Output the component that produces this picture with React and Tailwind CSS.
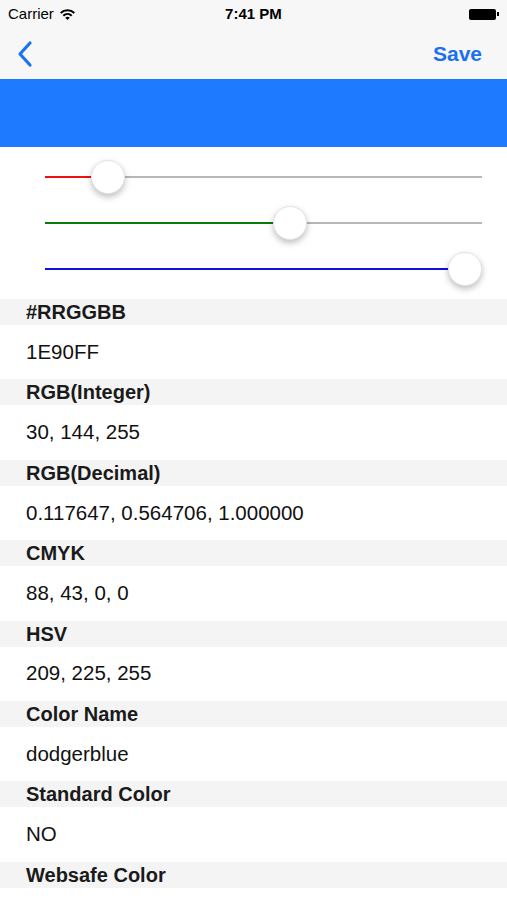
const rows = [
  ['#RRGGBB', '1E90FF'],
  ['RGB(Integer)', '30, 144, 255'],
  ['RGB(Decimal)', '0.117647, 0.564706, 1.000000'],
  ['CMYK', '88, 43, 0, 0'],
  ['HSV', '209, 225, 255'],
  ['Color Name', 'dodgerblue'],
  ['Standard Color', 'NO'],
  ['Websafe Color', ''],
];

const Slider = ({ color, pos }) => (
  <div className="relative h-[46px] mx-[45px] mr-[25px]">
    <div className="absolute left-0 right-0 top-[22px] h-[2px] bg-[#b6b6b6]" />
    <div className="absolute left-0 top-[22px] h-[2px]" style={{ width: pos, background: color }} />
    <div
      className="absolute top-[6px] w-[34px] h-[34px] rounded-full bg-white shadow-[0_3px_6px_rgba(0,0,0,0.25)] border border-[#e4e4e4]"
      style={{ left: pos - 17 }}
    />
  </div>
);

export default function App() {
  return (
    <div className="w-[507px] h-[900px] overflow-hidden bg-white" style={{ fontFamily: '"Liberation Sans", Arial, sans-serif' }}>
      <div className="bg-[#f7f7f8]">
        <div className="h-[28px] flex items-center justify-between px-[8px] text-[15px] text-black">
          <div className="flex items-center gap-[5px]">
            <span>Carrier</span>
            <svg width="17" height="12" viewBox="0 0 17 12">
              <path d="M1 4.2a11 11 0 0 1 15 0l-1.4 1.5a9 9 0 0 0-12.2 0z" fill="#000" />
              <path d="M3.6 7a7.2 7.2 0 0 1 9.8 0L12 8.4a5.2 5.2 0 0 0-7 0z" fill="#000" />
              <path d="M6.2 9.7a3.4 3.4 0 0 1 4.6 0L8.5 12z" fill="#000" />
            </svg>
          </div>
          <span className="font-bold ml-[40px]">7:41 PM</span>
          <div className="flex items-center w-[108px] justify-end">
            <div className="w-[27px] h-[11px] bg-black rounded-[2px]" />
            <div className="w-[2px] h-[4px] bg-black ml-[1px]" />
          </div>
        </div>
        <div className="h-[51px] flex items-center justify-between pl-[15px] pr-[25px]">
          <svg width="20" height="28" viewBox="0 0 20 28">
            <path d="M15 3L5 14l10 11" fill="none" stroke="#1a73f0" strokeWidth="3.2" strokeLinecap="round" strokeLinejoin="round" />
          </svg>
          <span className="text-[#1b6ff2] text-[21px] font-bold">Save</span>
        </div>
      </div>
      <div className="h-[68px] bg-[#1e7bff]" />
      <div className="pt-[7px] pb-[7px]">
        <Slider color="#ee1111" pos={63} />
        <Slider color="#0a7a0a" pos={245} />
        <Slider color="#1010e0" pos={420} />
      </div>
      <div>
        {rows.map(([h, v]) => (
          <div key={h}>
            <div className="h-[26px] bg-[#f4f4f4] flex items-center px-[26px] text-[20px] font-bold text-[#1a1a1a]">{h}</div>
            <div className="h-[54.4px] flex items-center px-[26px] text-[20.5px] text-[#111]">{v}</div>
          </div>
        ))}
      </div>
    </div>
  );
}
